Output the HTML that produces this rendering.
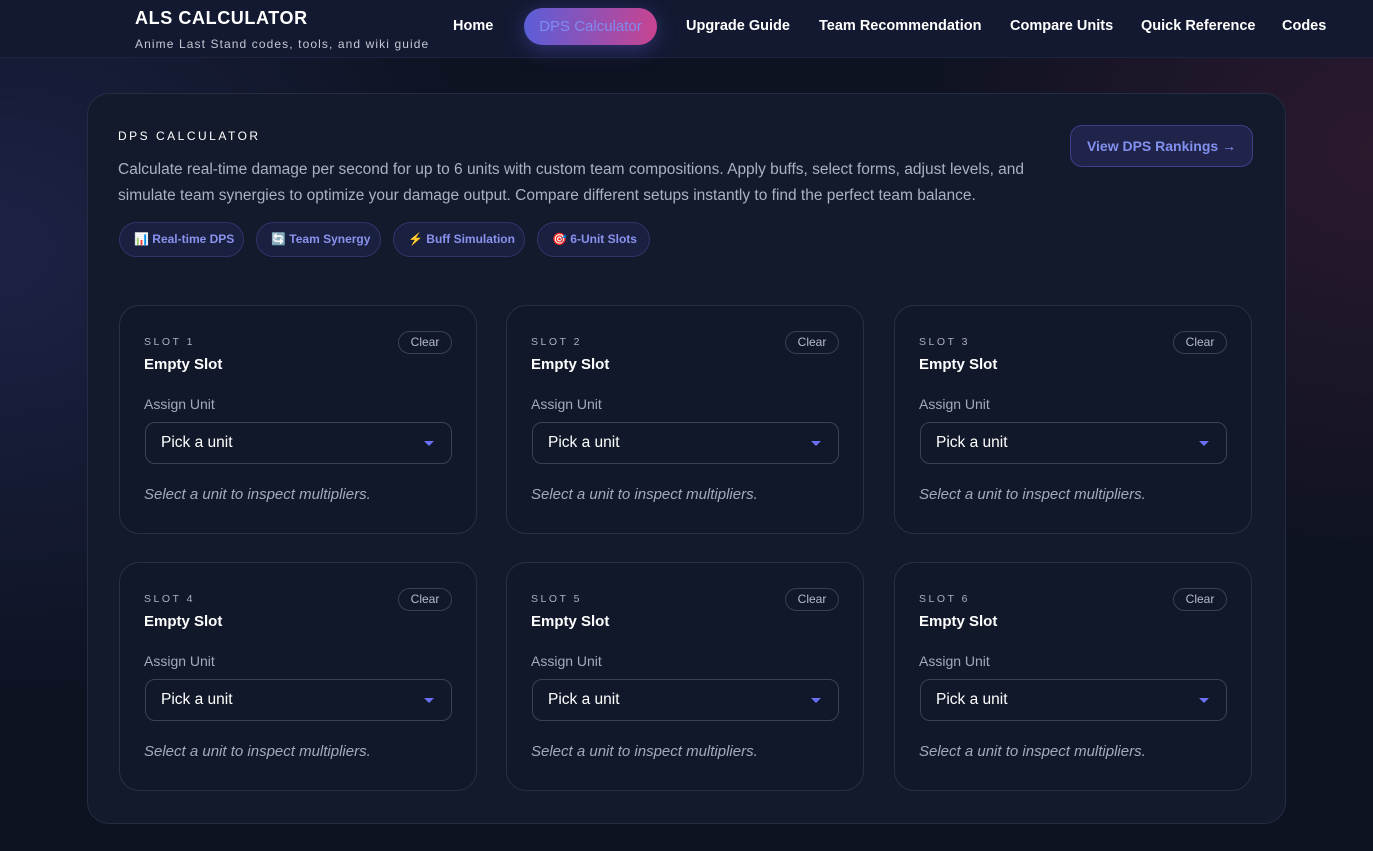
<!DOCTYPE html>
<html><head><meta charset="utf-8"><style>
*{box-sizing:border-box;margin:0;padding:0}
body{width:1373px;height:851px;overflow:hidden;font-family:"Liberation Sans",sans-serif;color:#e8ecf5;
background:radial-gradient(ellipse 500px 450px at 0px 250px,rgba(60,70,150,.3),transparent),radial-gradient(ellipse 450px 400px at 1373px 150px,rgba(120,40,80,.28),transparent),#0e1322;}
.hdr{position:absolute;left:0;top:0;width:1373px;height:58px;background:#121930;border-bottom:1px solid #1c2440}
.logo{position:absolute;left:135px;top:8px;font-weight:bold;font-size:18px;letter-spacing:.6px;color:#fff}
.sub{position:absolute;left:135px;top:37px;font-size:12px;color:#c3c8d5;letter-spacing:1.1px}
.nav a{position:absolute;top:18px;font-size:14.5px;font-weight:bold;color:#fff;text-decoration:none}
.pill{position:absolute;left:524px;top:8px;width:133px;height:37px;border-radius:19px;background:linear-gradient(90deg,#5a5ed8,#c84490);color:#7f8cf0;font-size:15px;text-align:center;line-height:37px;box-shadow:0 4px 20px rgba(100,90,220,.4)}
.panel{position:absolute;left:87px;top:93px;width:1199px;height:731px;border-radius:22px;background:#131a2b;border:1px solid #242d42}
.t{position:absolute;left:118px;top:129px;font-size:12px;letter-spacing:2.5px;color:#fff}
.d{position:absolute;left:118px;top:157px;width:950px;font-size:15.5px;line-height:26px;color:#a9b1c3}
.btn{position:absolute;left:1070px;top:125px;width:183px;height:42px;border-radius:12px;background:#20244a;border:1px solid #3b3f8a;color:#8290ef;font-weight:bold;font-size:14px;text-align:center;line-height:40px}
.tag{position:absolute;top:222px;height:35px;border-radius:18px;background:#1a2040;border:1px solid #2e3568;color:#8a92ee;font-size:12px;font-weight:bold;line-height:33px;padding-left:14px}
.card{position:absolute;width:358px;height:229px;border-radius:20px;border:1px solid #283045;background:#111829}
.card .s{position:absolute;left:24px;top:30px;font-size:10.5px;letter-spacing:2.5px;color:#aab0bf}
.card .e{position:absolute;left:24px;top:50px;font-size:15px;font-weight:bold;color:#fff}
.card .c{position:absolute;right:24px;top:25px;width:54px;height:23px;border-radius:12px;border:1px solid #374055;font-size:12px;color:#b5bbc8;text-align:center;line-height:21px}
.card .a{position:absolute;left:24px;top:90px;font-size:14px;color:#a3aabb}
.card .p{position:absolute;left:25px;top:116px;width:307px;height:42px;border-radius:10px;border:1px solid #3a4257;font-size:15.5px;color:#fff;line-height:40px;padding-left:15px}
.card .p:after{content:"";position:absolute;right:17px;top:18px;border-left:5px solid transparent;border-right:5px solid transparent;border-top:5px solid #6b6ff5}
.card .i{position:absolute;left:24px;top:180px;font-size:15px;font-style:italic;color:#a3aabb}
</style></head><body>
<div class="hdr">
<div class="logo">ALS CALCULATOR</div>
<div class="sub">Anime Last Stand codes, tools, and wiki guide</div>
<div class="nav">
<a style="left:453px">Home</a>
<a style="left:686px">Upgrade Guide</a>
<a style="left:819px">Team Recommendation</a>
<a style="left:1010px">Compare Units</a>
<a style="left:1141px">Quick Reference</a>
<a style="left:1282px">Codes</a>
</div>
<div class="pill">DPS Calculator</div>
</div>
<div class="panel"></div>
<div class="t">DPS CALCULATOR</div>
<div class="d">Calculate real-time damage per second for up to 6 units with custom team compositions. Apply buffs, select forms, adjust levels, and simulate team synergies to optimize your damage output. Compare different setups instantly to find the perfect team balance.</div>
<div class="btn">View DPS Rankings →</div>
<div class="tag" style="left:119px;width:125px">📊 Real-time DPS</div>
<div class="tag" style="left:256px;width:125px">🔄 Team Synergy</div>
<div class="tag" style="left:393px;width:132px">⚡ Buff Simulation</div>
<div class="tag" style="left:537px;width:113px">🎯 6-Unit Slots</div>

<div class="card" style="left:119px;top:305px"><div class="s">SLOT 1</div><div class="e">Empty Slot</div><div class="c">Clear</div><div class="a">Assign Unit</div><div class="p">Pick a unit</div><div class="i">Select a unit to inspect multipliers.</div></div>
<div class="card" style="left:506px;top:305px"><div class="s">SLOT 2</div><div class="e">Empty Slot</div><div class="c">Clear</div><div class="a">Assign Unit</div><div class="p">Pick a unit</div><div class="i">Select a unit to inspect multipliers.</div></div>
<div class="card" style="left:894px;top:305px"><div class="s">SLOT 3</div><div class="e">Empty Slot</div><div class="c">Clear</div><div class="a">Assign Unit</div><div class="p">Pick a unit</div><div class="i">Select a unit to inspect multipliers.</div></div>
<div class="card" style="left:119px;top:562px"><div class="s">SLOT 4</div><div class="e">Empty Slot</div><div class="c">Clear</div><div class="a">Assign Unit</div><div class="p">Pick a unit</div><div class="i">Select a unit to inspect multipliers.</div></div>
<div class="card" style="left:506px;top:562px"><div class="s">SLOT 5</div><div class="e">Empty Slot</div><div class="c">Clear</div><div class="a">Assign Unit</div><div class="p">Pick a unit</div><div class="i">Select a unit to inspect multipliers.</div></div>
<div class="card" style="left:894px;top:562px"><div class="s">SLOT 6</div><div class="e">Empty Slot</div><div class="c">Clear</div><div class="a">Assign Unit</div><div class="p">Pick a unit</div><div class="i">Select a unit to inspect multipliers.</div></div>
</body></html>
